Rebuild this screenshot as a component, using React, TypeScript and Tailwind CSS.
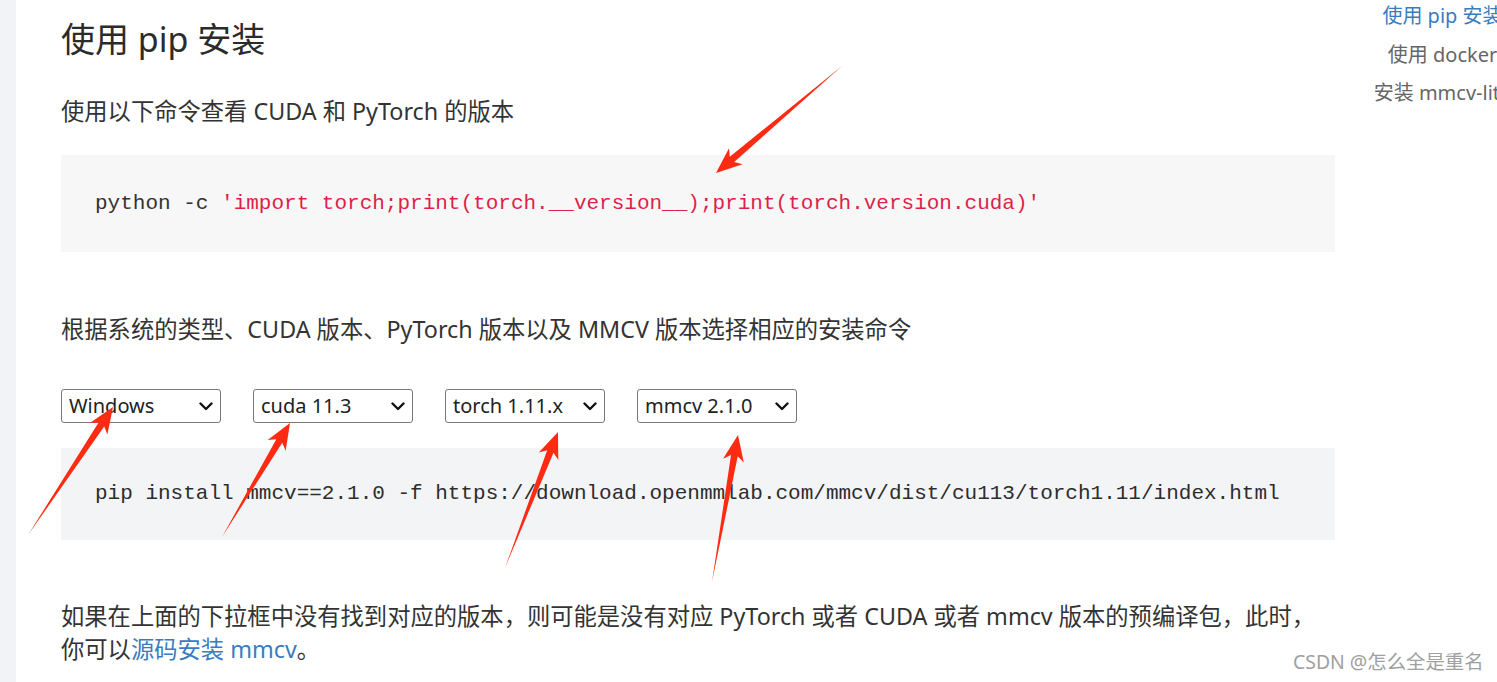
import React from 'react'

const sans = '"Noto Sans", "Noto Sans CJK SC", sans-serif'
const mono = '"DejaVu Sans Mono", "Liberation Mono", monospace'

const arrows = [
  { t: [842, 66], p: [716, 173] },
  { t: [28, 535], p: [113, 407] },
  { t: [222, 537], p: [290, 423] },
  { t: [505, 568], p: [558, 432] },
  { t: [712, 582], p: [738, 435] },
]

function arrowPoints(t: number[], p: number[]) {
  const dx = p[0] - t[0]
  const dy = p[1] - t[1]
  const len = Math.hypot(dx, dy)
  const ux = dx / len
  const uy = dy / len
  const nx = -uy
  const ny = ux
  const head = 21
  const s = 3.4
  const w = 10.5
  const neck = [p[0] - ux * head, p[1] - uy * head]
  const wing = [p[0] - ux * (head + 5), p[1] - uy * (head + 5)]
  const pts = [
    t,
    [neck[0] + nx * s, neck[1] + ny * s],
    [wing[0] + nx * w, wing[1] + ny * w],
    p,
    [wing[0] - nx * w, wing[1] - ny * w],
    [neck[0] - nx * s, neck[1] - ny * s],
  ]
  return pts.map((q) => `${q[0].toFixed(1)},${q[1].toFixed(1)}`).join(' ')
}

function Chevron() {
  return (
    <svg width="14" height="9" viewBox="0 0 14 9" fill="none">
      <path d="M1.5 1.5 L7 7 L12.5 1.5" stroke="#111" strokeWidth="2.4" strokeLinecap="round" strokeLinejoin="round" />
    </svg>
  )
}

function Select({ label }: { label: string }) {
  return (
    <div className="w-[160px] h-[34px] flex items-center justify-between pl-[7px] pr-[7px] border border-[#777] rounded-[3px] bg-white text-[20px] text-[#222]">
      <span>{label}</span>
      <Chevron />
    </div>
  )
}

export default function App() {
  const tocItems = [
    { name: '使用 pip 安装', active: true },
    { name: '使用 docker', active: false },
    { name: '安装 mmcv-lite', active: false },
  ]

  return (
    <div className="relative w-[1497px] h-[682px] overflow-hidden bg-white flex" style={{ fontFamily: sans }}>
      {/* left gray strip */}
      <div className="w-[16px] flex-none bg-[#f2f3f7]" />

      {/* main article */}
      <main className="w-[1334px] flex-none pl-[45px] pr-[15px] pt-[18px] text-[#333]">
        <h1 className="text-[34px] leading-[43px] font-normal text-[#2b2b2b]">使用 pip 安装</h1>

        <p className="mt-[34px] text-[23.3px] leading-[33px]">使用以下命令查看 CUDA 和 PyTorch 的版本</p>

        <pre className="mt-[27px] h-[97px] flex items-center px-[34px] bg-[#f7f7f7] text-[21px]" style={{ fontFamily: mono }}>
          <code>
            <span className="text-[#333]">python -c </span>
            <span className="text-[#dd1f4a]">'import torch;print(torch.__version__);print(torch.version.cuda)'</span>
          </code>
        </pre>

        <p className="mt-[61px] text-[23.3px] leading-[33px]">
          根据系统的类型、CUDA 版本、PyTorch 版本以及 MMCV 版本选择相应的安装命令
        </p>

        <div className="mt-[43px] flex gap-[32px]">
          <Select label="Windows" />
          <Select label="cuda 11.3" />
          <Select label="torch 1.11.x" />
          <Select label="mmcv 2.1.0" />
        </div>

        <pre className="mt-[25px] h-[92px] flex items-center px-[34px] bg-[#f3f4f6] text-[21px] text-[#2d2d2d]" style={{ fontFamily: mono }}>
          <code>pip install mmcv==2.1.0 -f https://download.openmmlab.com/mmcv/dist/cu113/torch1.11/index.html</code>
        </pre>

        <p className="mt-[60px] text-[23.3px] leading-[33px] whitespace-nowrap">
          如果在上面的下拉框中没有找到对应的版本，则可能是没有对应 PyTorch 或者 CUDA 或者 mmcv 版本的预编译包，此时，
          <br />
          你可以<a className="text-[#3a7cc0]">源码安装 mmcv</a>。
        </p>
      </main>

      {/* table of contents */}
      <nav className="w-[185px] flex-none pt-[2px] text-center text-[20px] leading-[28px]">
        {tocItems.map((item) => (
          <div key={item.name} className={`h-[38.5px] whitespace-nowrap ${item.active ? 'text-[#3a7cc0]' : 'text-[#666]'}`}>
            {item.name}
          </div>
        ))}
      </nav>

      {/* annotation arrows */}
      <svg className="absolute inset-0 pointer-events-none" width="1497" height="682">
        {arrows.map((a, i) => (
          <polygon key={i} points={arrowPoints(a.t, a.p)} fill="#ff2a12" />
        ))}
      </svg>

      {/* watermark */}
      <div className="absolute left-[1293px] top-[650px] text-[19.4px] leading-[24px] text-[#a0a0a0] whitespace-nowrap">
        CSDN @怎么全是重名
      </div>
    </div>
  )
}
